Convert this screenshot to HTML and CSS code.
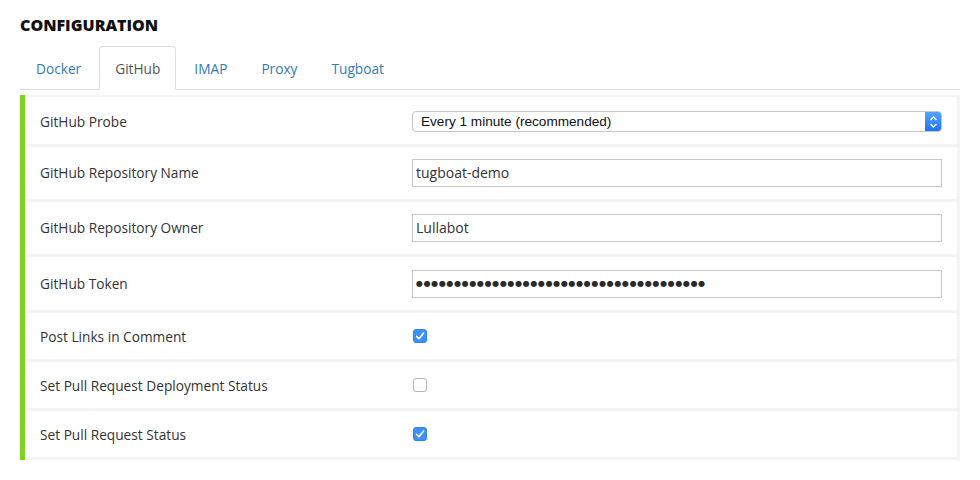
FILE: index.html
```html
<!DOCTYPE html>
<html>
<head>
<meta charset="utf-8">
<link rel="stylesheet" href="styles.css">
</head>
<body>
<div class="page">
  <h1 class="title">CONFIGURATION</h1>
  <ul class="tabs">
    <li class="tab"><a>Docker</a></li>
    <li class="tab active"><a>GitHub</a></li>
    <li class="tab"><a>IMAP</a></li>
    <li class="tab"><a>Proxy</a></li>
    <li class="tab"><a>Tugboat</a></li>
  </ul>
  <div class="panel">
    <div class="row row-select">
      <div class="label">GitHub Probe</div>
      <div class="control">
        <div class="select">
          <span class="select-text">Every 1 minute (recommended)</span>
          <span class="select-btn">
            <svg width="9" height="14" viewBox="0 0 9 14"><path d="M1.5 5 L4.5 2 L7.5 5" fill="none" stroke="#fff" stroke-width="1.4"/><path d="M1.5 9 L4.5 12 L7.5 9" fill="none" stroke="#fff" stroke-width="1.4"/></svg>
          </span>
        </div>
      </div>
    </div>
    <div class="row row-input">
      <div class="label">GitHub Repository Name</div>
      <div class="control"><div class="input">tugboat-demo</div></div>
    </div>
    <div class="row row-input">
      <div class="label">GitHub Repository Owner</div>
      <div class="control"><div class="input">Lullabot</div></div>
    </div>
    <div class="row row-input row-token">
      <div class="label">GitHub Token</div>
      <div class="control"><div class="input dots">●●●●●●●●●●●●●●●●●●●●●●●●●●●●●●●●●●●●●●</div></div>
    </div>
    <div class="row">
      <div class="label">Post Links in Comment</div>
      <div class="control"><span class="check on"><svg width="14" height="14" viewBox="0 0 14 14"><path d="M3.6 7.4 L6 9.8 L10.6 4" fill="none" stroke="#fff" stroke-width="1.6" stroke-linecap="round" stroke-linejoin="round"/></svg></span></div>
    </div>
    <div class="row">
      <div class="label">Set Pull Request Deployment Status</div>
      <div class="control"><span class="check"></span></div>
    </div>
    <div class="row">
      <div class="label">Set Pull Request Status</div>
      <div class="control"><span class="check on"><svg width="14" height="14" viewBox="0 0 14 14"><path d="M3.6 7.4 L6 9.8 L10.6 4" fill="none" stroke="#fff" stroke-width="1.6" stroke-linecap="round" stroke-linejoin="round"/></svg></span></div>
    </div>
  </div>
</div>
</body>
</html>
```

FILE: styles.css
```css
* { box-sizing: border-box; }
html, body { margin: 0; padding: 0; background: #fff; }
body {
  font-family: "Open Sans", "Noto Sans", sans-serif;
  font-size: 13.7px;
  color: #333;
}
.page { padding: 13px 20px 0 20px; width: 980px; }
.title {
  margin: 0;
  font-size: 16px;
  line-height: 24px;
  font-weight: 800;
  color: #111;
  letter-spacing: 0;
}
.tabs {
  list-style: none;
  margin: 9px 0 0 0;
  padding: 0;
  display: flex;
  border-bottom: 1px solid #ddd;
  width: 940px;
}
.tab { margin: 0 2px -1px 0; }
.tab a {
  display: block;
  padding: 11px 15px 10px;
  line-height: 21px;
  color: #337ab7;
  border: 1px solid transparent;
  border-radius: 4px 4px 0 0;
}
.tab.active a {
  color: #555;
  background: #fff;
  border-color: #ddd #ddd transparent #ddd;
}
.panel {
  margin-top: 5px;
  width: 940px;
  background: #f4f4f4;
  border-left: 5px solid #7ed321;
  padding: 2px 3px 3px 0;
  display: flex;
  flex-direction: column;
  gap: 3px;
}
.row {
  background: #fff;
  display: grid;
  grid-template-columns: 372px 1fr;
  align-items: center;
  padding: 0 15px;
  height: 46px;
}
.row-select { height: 47px; }
.row-select .label { padding-top: 2px; }
.row-input { height: 52px; }
.row-input .label { padding-top: 0; }
.row-token { height: 53px; }
.label { line-height: 22px; padding-top: 1px; }
.control { display: flex; align-items: center; }
.select {
  width: 100%;
  height: 21px;
  display: flex;
  border: 1px solid #c6c6c6;
  border-radius: 4px;
  background: #fff;
  overflow: hidden;
  margin-top: 2px;
}
.select-text {
  flex: 1;
  font-family: "Liberation Sans", Arial, sans-serif;
  font-size: 13.6px;
  line-height: 19px;
  color: #111;
  padding-left: 8px;
}
.select-btn {
  width: 17px;
  margin: -1px -1px -1px 0;
  background: linear-gradient(#5aa6fb, #1a72f2);
  border-radius: 0 4px 4px 0;
  display: flex;
  align-items: center;
  justify-content: center;
}
.input {
  width: 100%;
  height: 28px;
  border: 1px solid #c8c8c8;
  padding: 0 3px;
  line-height: 26px;
  font-size: 14px;
  color: #333;
}
.dots {
  font-family: "DejaVu Sans", sans-serif;
  font-size: 8px;
  letter-spacing: 0.65px;
  color: #2a2a2a;
  padding-left: 3px;
}
.check {
  width: 14px;
  height: 14px;
  border-radius: 3px;
  border: 1px solid #b4b4b4;
  background: #fff;
  display: inline-flex;
  margin-left: 1px;
}
.check.on {
  background: #3b8ff7;
  border-color: #2f84f0;
}
.check svg { margin: -1px; }
```
